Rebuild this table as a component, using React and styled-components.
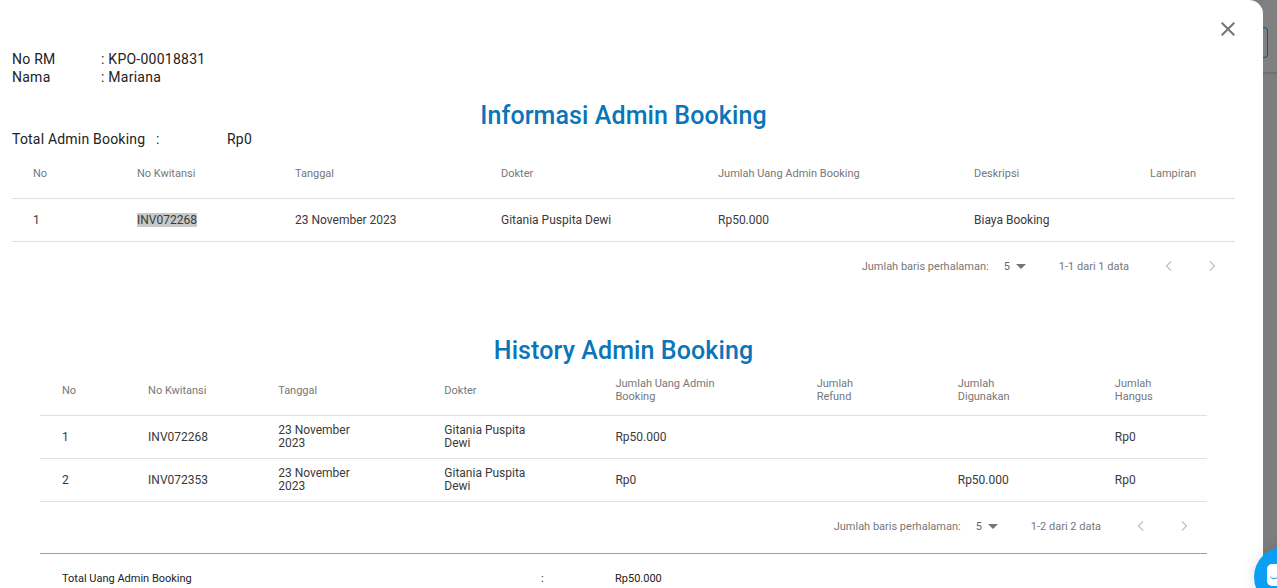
import React from "react";
import styled, { createGlobalStyle } from "styled-components";

const Global = createGlobalStyle`
  html, body { margin: 0; padding: 0; }
  body {
    font-family: Roboto, "Liberation Sans", Arial, sans-serif;
    background: #7d7d7d;
    overflow: hidden;
    -webkit-font-smoothing: antialiased;
  }
`;

const Screen = styled.div`
  display: flex;
  width: 1277px;
  height: 588px;
  overflow: hidden;
`;

const Modal = styled.div`
  position: relative;
  flex: 0 0 1263px;
  height: 588px;
  background: #fff;
  border-top-right-radius: 14px;
  overflow: hidden;
  box-sizing: border-box;
  padding: 50px 28px 0 12px;
  display: flex;
  flex-direction: column;
`;

const PageEdge = styled.div`
  flex: 1;
  display: flex;
  flex-direction: column;
  background: #7d7d7d;
`;

const PageHeader = styled.div`
  height: 74px;
  box-sizing: border-box;
  padding-top: 27px;
  background: #808080;
  border-bottom: 2px solid #6f6f6f;
`;

const DimButton = styled.div`
  width: 4px;
  height: 29px;
  border: 1.5px solid #0b5a94;
  border-left: none;
  border-radius: 0 4px 4px 0;
`;

const CloseButton = styled.button`
  position: absolute;
  top: 17px;
  right: 23px;
  width: 24px;
  height: 24px;
  padding: 0;
  border: none;
  background: transparent;
  display: flex;
  align-items: center;
  justify-content: center;
  color: #757575;
  cursor: pointer;
`;

const InfoGrid = styled.div`
  display: grid;
  grid-template-columns: 89px auto;
  font-size: 14px;
  line-height: 18px;
  letter-spacing: 0.25px;
  color: #222;
`;

const Heading = styled.h2`
  margin: ${(p) => p.$mt || 0}px 0 0;
  text-align: center;
  font-size: 25px;
  font-weight: 500;
  line-height: 29px;
  color: #0a75b9;
  letter-spacing: 0.1px;
`;

const TotalLine = styled.div`
  display: grid;
  grid-template-columns: 144px 71px auto;
  font-size: 14px;
  line-height: 18px;
  letter-spacing: 0.2px;
  color: #222;
`;

const Section = styled.div`
  padding: 0 ${(p) => p.$inset || 0}px;
`;

const Table = styled.table`
  width: 100%;
  border-collapse: collapse;
  table-layout: fixed;
`;

const Th = styled.th`
  height: 50px;
  padding: 0 0 0 ${(p) => p.$pad}px;
  text-align: left;
  font-weight: 400;
  font-size: 11px;
  line-height: 13px;
  color: #777;
  border-bottom: 1px solid #e0e0e0;
  vertical-align: middle;
`;

const Td = styled.td`
  height: 42px;
  padding: 0 0 0 ${(p) => p.$pad}px;
  font-size: 12px;
  line-height: 13px;
  color: #3a3a3a;
  border-bottom: 1px solid #e0e0e0;
  vertical-align: middle;
`;

const Wrap = styled.div`
  max-width: ${(p) => p.$w}px;
`;

const Selected = styled.span`
  background: #c9c9c9;
`;

const Pager = styled.div`
  height: 48px;
  display: flex;
  align-items: center;
  justify-content: flex-end;
  padding-right: 3px;
  font-size: 11px;
  color: #777;
`;

const PagerSelect = styled.div`
  display: flex;
  align-items: center;
  margin-left: 15px;
  margin-right: 30px;
  color: #666;
  gap: 3px;
`;

const PagerButtons = styled.div`
  display: flex;
  gap: 3px;
  margin-left: 20px;
`;

const PagerButton = styled.button`
  width: 40px;
  height: 40px;
  padding: 0;
  border: none;
  background: transparent;
  display: flex;
  align-items: center;
  justify-content: center;
  color: #bdbdbd;
`;

const Divider = styled.div`
  margin-top: 3px;
  border-top: 1px solid #9e9e9e;
`;

const TotalRow = styled.div`
  display: grid;
  grid-template-columns: 479px 74px auto;
  padding: 18px 0 0 22px;
  font-size: 11px;
  line-height: 13px;
  color: #222;
`;

const ChatBubble = styled.div`
  position: fixed;
  left: 1254px;
  top: 547px;
  width: 60px;
  height: 60px;
  border-radius: 50%;
  background: #0a9ff5;
  box-shadow: 0 0 14px rgba(0, 0, 0, 0.12);
`;

const ChatIcon = styled.div`
  position: absolute;
  left: 13px;
  top: 17px;
  width: 20px;
  height: 22px;
  border-radius: 5px;
  background: #fff;
`;

const ChatSmile = styled.div`
  position: absolute;
  left: 3px;
  top: 11px;
  width: 8px;
  height: 3px;
  border-bottom: 1.5px solid #0a9ff5;
  border-radius: 0 0 6px 6px;
`;

const CloseIcon = () => (
  <svg width="24" height="24" viewBox="0 0 24 24" fill="currentColor">
    <path d="M19 6.41L17.59 5 12 10.59 6.41 5 5 6.41 10.59 12 5 17.59 6.41 19 12 13.41 17.59 19 19 17.59 13.41 12z" />
  </svg>
);

const DropIcon = () => (
  <svg width="16" height="16" viewBox="4 4 16 16" fill="#757575">
    <path d="M7 10l5 5 5-5z" />
  </svg>
);

const Chevron = ({ dir }) => (
  <svg width="20" height="20" viewBox="0 0 24 24" fill="none" stroke="currentColor" strokeWidth="1.4">
    {dir === "left" ? <path d="M14.5 6.5l-5.5 5.5 5.5 5.5" /> : <path d="M9.5 6.5l5.5 5.5-5.5 5.5" />}
  </svg>
);

const Pagination = ({ text }) => (
  <Pager>
    <span>Jumlah baris perhalaman:</span>
    <PagerSelect>
      <span>5</span>
      <DropIcon />
    </PagerSelect>
    <span>{text}</span>
    <PagerButtons>
      <PagerButton>
        <Chevron dir="left" />
      </PagerButton>
      <PagerButton>
        <Chevron dir="right" />
      </PagerButton>
    </PagerButtons>
  </Pager>
);

const infoCols = [104, 158, 206, 217, 256, 176, 106];
const infoHead = ["No", "No Kwitansi", "Tanggal", "Dokter", "Jumlah Uang Admin Booking", "Deskripsi", "Lampiran"];

const histCols = [86, 130, 166, 171, 201, 141, 157, 114];
const histHead = [
  ["No"],
  ["No Kwitansi"],
  ["Tanggal"],
  ["Dokter"],
  ["Jumlah Uang Admin", "Booking"],
  ["Jumlah", "Refund"],
  ["Jumlah", "Digunakan"],
  ["Jumlah", "Hangus"],
];
const histRows = [
  ["1", "INV072268", "23 November 2023", "Gitania Puspita Dewi", "Rp50.000", "", "", "Rp0"],
  ["2", "INV072353", "23 November 2023", "Gitania Puspita Dewi", "Rp0", "", "Rp50.000", "Rp0"],
];
const wrapW = [null, null, 84, 84, null, null, null, null];

export default function App() {
  return (
    <>
      <Global />
      <Screen>
        <Modal>
          <CloseButton aria-label="close">
            <CloseIcon />
          </CloseButton>

          <InfoGrid>
            <span>No RM</span>
            <span>: KPO-00018831</span>
            <span>Nama</span>
            <span>: Mariana</span>
          </InfoGrid>

          <Heading $mt={15}>Informasi Admin Booking</Heading>

          <TotalLine>
            <span>Total Admin Booking</span>
            <span>:</span>
            <span>Rp0</span>
          </TotalLine>

          <Section>
            <Table>
              <colgroup>
                {infoCols.map((w, i) => (
                  <col key={i} style={{ width: w }} />
                ))}
              </colgroup>
              <thead>
                <tr>
                  {infoHead.map((h) => (
                    <Th key={h} $pad={21}>
                      {h}
                    </Th>
                  ))}
                </tr>
              </thead>
              <tbody>
                <tr>
                  <Td $pad={21}>1</Td>
                  <Td $pad={21}>
                    <Selected>INV072268</Selected>
                  </Td>
                  <Td $pad={21}>23 November 2023</Td>
                  <Td $pad={21}>Gitania Puspita Dewi</Td>
                  <Td $pad={21}>Rp50.000</Td>
                  <Td $pad={21}>Biaya Booking</Td>
                  <Td $pad={21}></Td>
                </tr>
              </tbody>
            </Table>
            <Pagination text="1-1 dari 1 data" />
          </Section>

          <Heading $mt={46}>History Admin Booking</Heading>

          <Section $inset={28}>
            <Table>
              <colgroup>
                {histCols.map((w, i) => (
                  <col key={i} style={{ width: w }} />
                ))}
              </colgroup>
              <thead>
                <tr>
                  {histHead.map((lines, i) => (
                    <Th key={i} $pad={22}>
                      {lines.map((l, j) => (
                        <div key={j}>{l}</div>
                      ))}
                    </Th>
                  ))}
                </tr>
              </thead>
              <tbody>
                {histRows.map((row) => (
                  <tr key={row[0]}>
                    {row.map((c, i) => (
                      <Td key={i} $pad={22}>
                        {wrapW[i] ? <Wrap $w={wrapW[i]}>{c}</Wrap> : c}
                      </Td>
                    ))}
                  </tr>
                ))}
              </tbody>
            </Table>
            <Pagination text="1-2 dari 2 data" />
            <Divider />
            <TotalRow>
              <span>Total Uang Admin Booking</span>
              <span>:</span>
              <span>Rp50.000</span>
            </TotalRow>
          </Section>
        </Modal>
        <PageEdge>
          <PageHeader>
            <DimButton />
          </PageHeader>
        </PageEdge>
        <ChatBubble>
          <ChatIcon>
            <ChatSmile />
          </ChatIcon>
        </ChatBubble>
      </Screen>
    </>
  );
}
